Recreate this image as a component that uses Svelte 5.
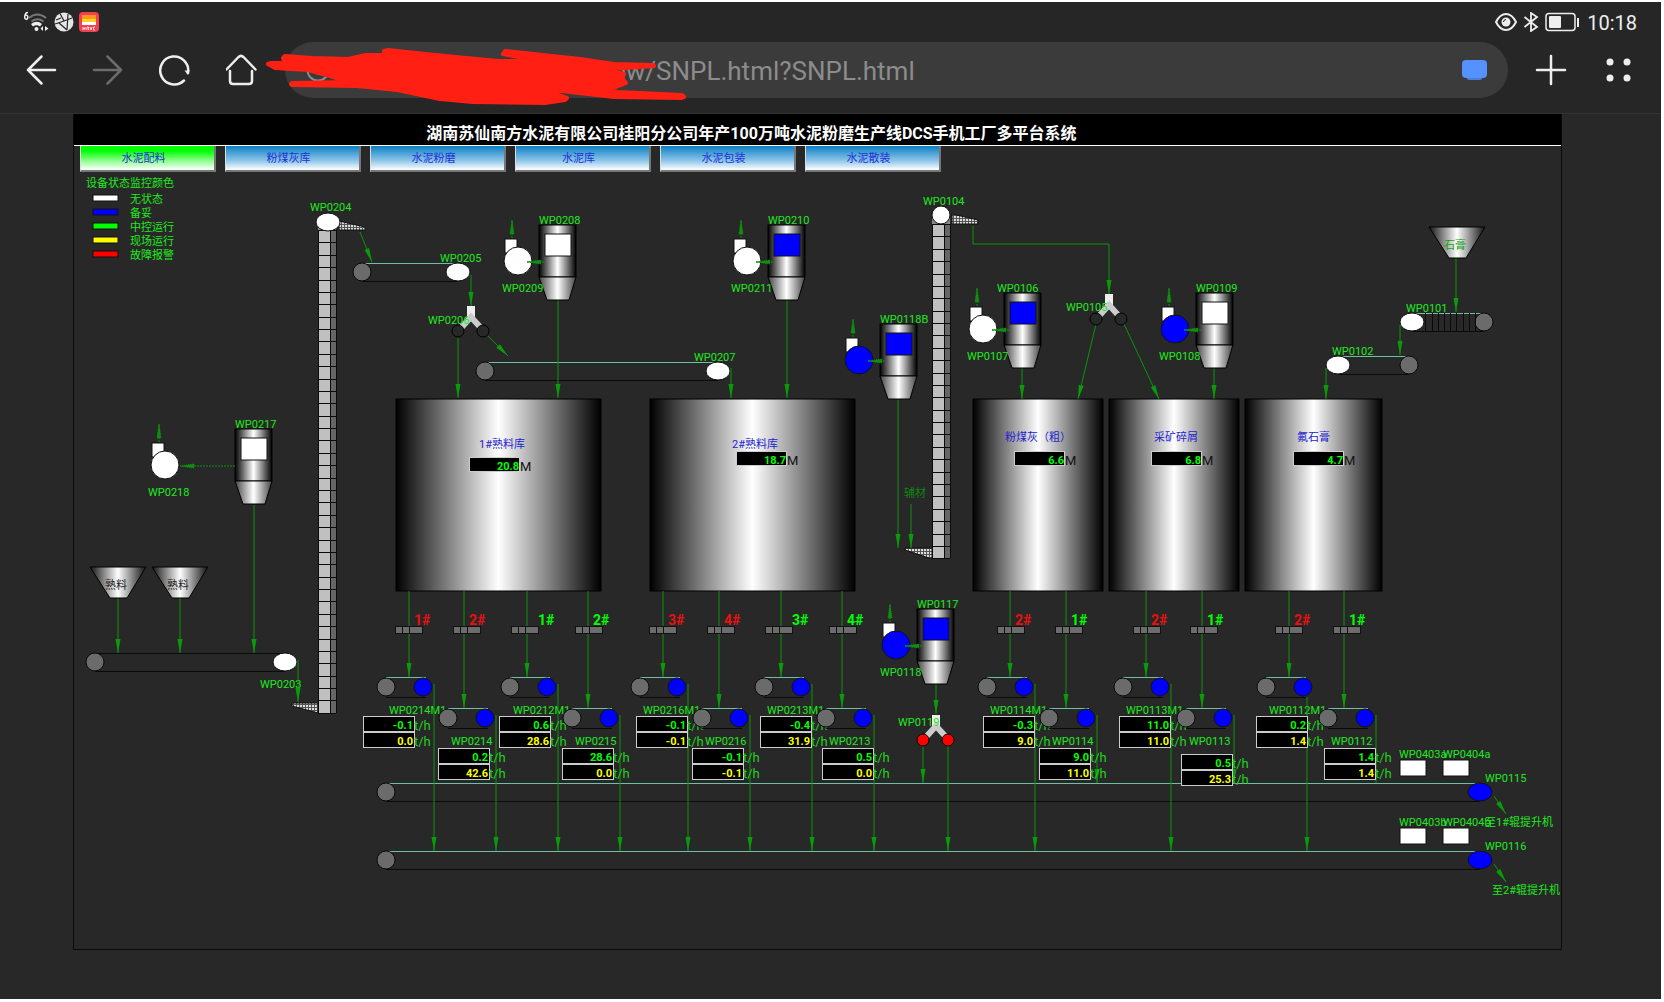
<script>
  const tabs = ['水泥配料', '粉煤灰库', '水泥粉磨', '水泥库', '水泥包装', '水泥散装'];
  let active = $state(0);

  const legend = [
    { text: '无状态', tone: 'white', y: 195 },
    { text: '备妥', tone: 'blue', y: 209 },
    { text: '中控运行', tone: 'lime', y: 223 },
    { text: '现场运行', tone: 'yellow', y: 237 },
    { text: '故障报警', tone: 'red', y: 251 }
  ];

  const silos = [
    { name: '1#熟料库', x: 396, w: 205, tx: 479, ty: 448, bx: 469, by: 457, level: '20.8' },
    { name: '2#熟料库', x: 650, w: 205, tx: 732, ty: 448, bx: 736, by: 451, level: '18.7' },
    { name: '粉煤灰（粗）', x: 973, w: 130, tx: 1005, ty: 441, bx: 1014, by: 451, level: '6.6' },
    { name: '采矿碎屑', x: 1109, w: 130, tx: 1154, ty: 441, bx: 1151, by: 451, level: '6.8' },
    { name: '氟石膏', x: 1245, w: 137, tx: 1297, ty: 441, bx: 1293, by: 451, level: '4.7' }
  ];

  const filters = [
    { name: 'WP0208', x: 539, y: 225, lx: 539, tone: 'white', fan: 'WP0209', fanTone: 'white', reach: 0 },
    { name: 'WP0210', x: 768, y: 225, lx: 768, tone: 'blue', fan: 'WP0211', fanTone: 'white', reach: 0 },
    { name: 'WP0118B', x: 880, y: 324, lx: 880, tone: 'blue', fan: '', fanTone: 'blue', reach: 0 },
    { name: 'WP0106', x: 1004, y: 293, lx: 997, tone: 'blue', fan: 'WP0107', fanTone: 'white', reach: 0 },
    { name: 'WP0109', x: 1196, y: 293, lx: 1196, tone: 'white', fan: 'WP0108', fanTone: 'blue', reach: 0 },
    { name: 'WP0217', x: 235, y: 429, lx: 235, tone: 'white', fan: 'WP0218', fanTone: 'white', reach: 49 },
    { name: 'WP0117', x: 917, y: 609, lx: 917, tone: 'blue', fan: 'WP0118', fanTone: 'blue', reach: 0 }
  ];

  const hoppers = [
    { name: '石膏', x: 1429, y: 227, tone: 'gypsum' },
    { name: '熟料', x: 90, y: 567, tone: 'clinker' },
    { name: '熟料', x: 152, y: 567, tone: 'clinker' }
  ];

  const elevators = [
    { x: 318, top: 230, count: 39 },
    { x: 932, top: 224, count: 27 }
  ];

  const chutes = [
    '339,221 339,230 365,230 365,227',
    '952,214 952,224 978,224 978,220',
    '292,703 318,703 318,713 292,706',
    '905,548 932,548 932,559 905,550'
  ];

  const belts = [
    { name: 'WP0205', lx: 440, gray: 362, drive: 458, y: 272, tone: 'white', top: 'belt' },
    { name: 'WP0207', lx: 694, gray: 485, drive: 718, y: 371, tone: 'white', top: 'belt' },
    { name: 'WP0203', lx: 260, ly: 688, gray: 95, drive: 285, y: 662, tone: 'white', top: 'dark' },
    { name: 'WP0101', lx: 1406, gray: 1484, drive: 1412, y: 322, tone: 'white', top: 'belt' },
    { name: 'WP0102', lx: 1332, gray: 1409, drive: 1338, y: 365, tone: 'white', top: 'belt' },
    { name: 'WP0115', lx: 1485, gray: 386, drive: 1480, y: 792, tone: 'blue', top: 'belt' },
    { name: 'WP0116', lx: 1485, gray: 386, drive: 1480, y: 860, tone: 'blue', top: 'belt' }
  ];
  const slats = [1425, 1432, 1438, 1444, 1450, 1456, 1463, 1469, 1475];

  const splitters = [
    { name: 'WP0206', x: 471, y: 306, lx: 428, ly: 324, tone: 'idle' },
    { name: 'WP0105', x: 1109, y: 294, lx: 1066, ly: 311, tone: 'idle' },
    { name: 'WP0119', x: 936, y: 715, lx: 898, ly: 726, tone: 'red' }
  ];

  // Feeders below the silos; "low" ones sit one step further down.
  const feeders = [
    { name: 'WP0214M1', tag: '1#', hand: true, x: 409, grate: 395, gray: 386, box: 363, v: ['-0.1', '0.0'] },
    { name: 'WP0214', tag: '2#', hand: true, x: 464, grate: 453, gray: 448, box: 438, v: ['0.2', '42.6'], low: true },
    { name: 'WP0212M1', tag: '1#', x: 527, grate: 511, gray: 510, box: 499, v: ['0.6', '28.6'] },
    { name: 'WP0215', tag: '2#', x: 588, grate: 575, gray: 572, box: 562, v: ['28.6', '0.0'], low: true },
    { name: 'WP0216M1', tag: '3#', hand: true, x: 663, grate: 649, gray: 640, box: 636, v: ['-0.1', '-0.1'] },
    { name: 'WP0216', tag: '4#', hand: true, x: 719, grate: 707, gray: 702, box: 692, v: ['-0.1', '-0.1'], low: true },
    { name: 'WP0213M1', tag: '3#', x: 781, grate: 765, gray: 764, box: 760, v: ['-0.4', '31.9'] },
    { name: 'WP0213', tag: '4#', x: 842, grate: 829, gray: 826, box: 822, v: ['0.5', '0.0'], low: true },
    { name: 'WP0114M1', tag: '2#', hand: true, x: 1010, grate: 997, gray: 987, box: 983, v: ['-0.3', '9.0'] },
    { name: 'WP0114', tag: '1#', x: 1066, grate: 1055, gray: 1049, box: 1039, v: ['9.0', '11.0'], low: true, end: 783 },
    { name: 'WP0113M1', tag: '2#', hand: true, x: 1146, grate: 1133, gray: 1123, box: 1119, v: ['11.0', '11.0'] },
    { name: 'WP0113', tag: '1#', x: 1202, grate: 1190, gray: 1186, box: 1181, v: ['0.5', '25.3'], low: true, end: 783, drop: 6 },
    { name: 'WP0112M1', tag: '2#', hand: true, x: 1289, grate: 1275, gray: 1266, box: 1256, v: ['0.2', '1.4'], out: 1307, from: 697 },
    { name: 'WP0112', tag: '1#', x: 1344, grate: 1333, gray: 1328, box: 1324, v: ['1.4', '1.4'], low: true, end: 783, plain: true }
  ];

  const flows = [
    [360, 232, 372, 262], [471, 275, 471, 306], [458, 338, 458, 398], [488, 336, 508, 356],
    [558, 300, 558, 398], [731, 368, 731, 398], [787, 300, 787, 398], [1109, 244, 1109, 294],
    [1096, 324, 1078, 399], [1124, 324, 1159, 399], [1022, 368, 1022, 399], [1214, 368, 1214, 399],
    [898, 399, 898, 548], [911, 504, 911, 548], [1456, 258, 1456, 312], [1400, 325, 1400, 355],
    [1326, 368, 1326, 399], [254, 505, 254, 653], [118, 597, 118, 653], [180, 597, 180, 653],
    [298, 660, 298, 702], [936, 684, 936, 714], [923, 746, 923, 783], [948, 746, 948, 851],
    [1494, 796, 1506, 814], [1494, 864, 1506, 882]
  ];

  const motors = [
    { name: 'WP0403a', x: 1400, lx: 1399, y: 760 },
    { name: 'WP0404a', x: 1443, lx: 1443, y: 760 },
    { name: 'WP0403b', x: 1400, lx: 1399, y: 828 },
    { name: 'WP0404b', x: 1443, lx: 1443, y: 828 }
  ];

  const notes = [
    { text: 'WP0204', x: 310, y: 211 },
    { text: 'WP0104', x: 923, y: 205 },
    { text: '至1#辊提升机', x: 1485, y: 826 },
    { text: '至2#辊提升机', x: 1492, y: 894 }
  ];

  function head(x1, y1, x2, y2) {
    const len = Math.hypot(x2 - x1, y2 - y1);
    const ux = (x2 - x1) / len;
    const uy = (y2 - y1) / len;
    const bx = x2 - ux * 14;
    const by = y2 - uy * 14;
    return `${x2},${y2} ${bx - uy * 2.5},${by + ux * 2.5} ${bx + uy * 2.5},${by - ux * 2.5}`;
  }
  const seg = (e, i) => Math.round(e.top + i * 12.38);
</script>

{#snippet arrow(x1, y1, x2, y2)}
  <line class="flow" {x1} {y1} {x2} {y2} />
  <polygon class="head" points={head(x1, y1, x2, y2)} />
{/snippet}

{#snippet reading(x, y, value, tone)}
  <rect class="well" {x} {y} width="51" height="15" />
  <text class="value {tone}" x={x + 50} y={y + 13}>{value}</text>
  <text class="unit" x={x + 51} y={y + 14}>t/h</text>
{/snippet}

<div class="screen">
  <header>
    <div class="status">
      <div class="left">
        <svg width="26" height="22" viewBox="23 11 26 22" aria-hidden="true">
          <path d="M28 12.500q-3 0-3.300 4.500a1.600 2 0 1 0 .8-1.500" class="thin" />
          <path d="M29 18q8-7 17 0M31.500 21.500q6-4.500 12 0" class="dim" />
          <path d="M31 24q6-4.500 11 0l-2 2.500q-3.500-2.500-7 0z" fill="#eee" />
          <circle cx="36.500" cy="29" r="2" fill="#eee" />
          <path d="M43 26v5l-2.500-2.500zM45 31v-5l3.500 2.500z" fill="#eee" />
        </svg>
        <svg width="20" height="20" viewBox="0 0 20 20" aria-hidden="true">
          <circle cx="10" cy="10" r="9.500" fill="#e6e6e6" />
          <path d="M6 1.500L10 9 1 12M10 9l8-3M5 11l8 7M14 2l-1 16M2 8l5-2" class="cut" />
        </svg>
        <svg width="20" height="20" viewBox="0 0 20 20" aria-hidden="true">
          <rect width="20" height="20" rx="4" fill="#f4404e" />
          <path d="M3 3h14v4H3z" fill="#ff9a1c" />
          <path d="M3 7h14v4H3z" fill="#ffd02a" />
          <path d="M3 10h14v3H3z" fill="#fff" />
          <path d="M4 15v3M6 15v3M4 16.500h2M8 18v-3h1.500v3M11 15l1 3 1-3M16 15h-1.500v3H16" stroke="#ffd9dc" fill="none" />
        </svg>
      </div>
      <div class="right">
        <svg width="22" height="20" viewBox="0 0 22 20" aria-hidden="true">
          <path d="M1 10Q5 2 11 2t10 8q-4 8-10 8T1 10z" fill="none" stroke="#eee" stroke-width="2" />
          <circle cx="11" cy="10" r="4.500" fill="#eee" />
          <path d="M8.500 10a2.500 2.500 0 0 1 2.500-2.500" stroke="#262626" fill="none" />
        </svg>
        <svg width="16" height="20" viewBox="0 0 16 20" aria-hidden="true">
          <path d="M1.500 5l12.500 10-6 4V1l6 4L1.500 15" fill="none" stroke="#eee" stroke-width="1.800" />
        </svg>
        <svg width="36" height="20" viewBox="0 0 36 20" aria-hidden="true">
          <rect x="1" y="1.500" width="29" height="17" rx="3" fill="none" stroke="#eee" stroke-width="1.500" />
          <rect x="4" y="4" width="12" height="12" rx="1" fill="#eee" />
          <rect x="32" y="6" width="2" height="9" fill="#eee" />
        </svg>
        <span class="clock">10:18</span>
      </div>
    </div>

    <div class="toolbar">
      <div class="nav">
        <button aria-label="后退">
          <svg width="32" height="32" viewBox="0 0 32 32"><path d="M30 16H3M16.500 2.500L3 16l13.500 13.500" /></svg>
        </button>
        <button class="off" aria-label="前进">
          <svg width="32" height="32" viewBox="0 0 32 32"><path d="M2 16h27M15.500 2.500L29 16 15.500 29.500" /></svg>
        </button>
        <button aria-label="刷新">
          <svg width="32" height="32" viewBox="1 0 32 32">
            <path d="M26 26.500A14 14 0 1 1 30 19" />
            <path d="M26.500 16.500h5L30 21z" class="solid" />
          </svg>
        </button>
        <button aria-label="主页">
          <svg width="32" height="32" viewBox="1 0 32 32">
            <path d="M1.500 15.500L13.500 3q2.500-2.300 5 0l12 12.500M5 17v10q0 3 3 3h16q3 0 3-3V17" />
          </svg>
        </button>
      </div>
      <div class="address">
        <svg class="info" width="24" height="24" viewBox="0 0 24 24" aria-hidden="true">
          <circle cx="12" cy="12" r="10.500" />
          <path d="M12 10v7M12 6v2" />
        </svg>
        <input type="text" aria-label="网址" value="ew/SNPL.html?SNPL.html" />
        <svg class="scribble" width="430" height="56" viewBox="285 42 430 56" aria-hidden="true">
          <path d="M268 64L271 63 285 63 283 58 285 56 312 58 348 59 366 55 384 55 384 51 388 50 435 55 498 61 538 61 503 54 505 51 580 59 614 64 653 65 654 66 625 68 606 70 624 74 622 78 626 83 616 87 603 90 618 92 682 95 684 97 681 98 614 97 553 90 549 92 567 98 565 100 545 103 473 102 440 99 397 90 357 86 292 85 291 84 292 83 350 82 330 76 308 70 275 68z" />
        </svg>
        <svg class="device" width="25" height="21" viewBox="0 0 25 21" aria-hidden="true">
          <path d="M5 17h15v1q0 2-2 2H7q-2 0-2-2z" fill="#4a80d8" />
          <rect width="25" height="18" rx="4" fill="#5591ff" />
        </svg>
      </div>
      <div class="nav">
        <button aria-label="新建标签页">
          <svg width="32" height="32" viewBox="0 0 32 32"><path d="M16 2v28M2 16h28" /></svg>
        </button>
        <button aria-label="菜单">
          <svg width="32" height="32" viewBox="0 0 32 32">
            <g class="solid">
              <circle cx="8" cy="8" r="3.500" /><circle cx="25" cy="8" r="3.500" />
              <circle cx="8" cy="24" r="3.500" /><circle cx="25" cy="24" r="3.500" />
            </g>
          </svg>
        </button>
      </div>
    </div>
  </header>

  <main>
    <h1>湖南苏仙南方水泥有限公司桂阳分公司年产100万吨水泥粉磨生产线DCS手机工厂多平台系统</h1>
    <nav>
      {#each tabs as tab, i}
        <button class:active={active === i} onclick={() => (active = i)}>{tab}</button>
      {/each}
    </nav>

    <svg class="plant" viewBox="74 172 1487 777" role="img" aria-label="水泥配料">
      <defs>
        <linearGradient id="steel">
          <stop offset="0" stop-color="#000" />
          <stop offset="0.5" stop-color="#fff" />
          <stop offset="1" stop-color="#000" />
        </linearGradient>
        <linearGradient id="hopper">
          <stop offset="0" stop-color="#111" />
          <stop offset="0.5" stop-color="#fff" />
          <stop offset="1" stop-color="#111" />
        </linearGradient>
        <linearGradient id="cone">
          <stop offset="0" stop-color="#444" />
          <stop offset="0.5" stop-color="#fff" />
          <stop offset="1" stop-color="#444" />
        </linearGradient>
        <pattern id="mesh" width="3" height="3" patternUnits="userSpaceOnUse">
          <rect width="3" height="3" fill="#555" />
          <rect width="2" height="2" fill="#ddd" />
        </pattern>
      </defs>

      <text class="label" x="86" y="187">设备状态监控颜色</text>
      {#each legend as item}
        <rect class="key {item.tone}" x="93" y={item.y} width="25" height="6" />
        <text class="label" x="130" y={item.y + 8}>{item.text}</text>
      {/each}

      {#each elevators as e}
        <rect x={e.x} y={e.top - 7} width="18" height="7" fill="#888" />
        <rect x={e.x} y={e.top} width="12" height={seg(e, e.count) - e.top} fill="#c0c0c0" />
        <rect x={e.x + 12} y={e.top} width="6" height={seg(e, e.count) - e.top} fill="#666" />
        <path class="dark" d="M{e.x} {e.top}V{seg(e, e.count)}M{e.x + 12} {e.top}V{seg(e, e.count)}M{e.x + 18} {e.top}V{seg(e, e.count)}" />
        {#each Array(e.count + 1) as _, i}
          <line class="dark" x1={e.x} x2={e.x + 18} y1={seg(e, i)} y2={seg(e, i)} />
        {/each}
      {/each}
      {#each chutes as points}
        <polygon {points} fill="url(#mesh)" stroke="#111" />
      {/each}
      <ellipse class="white rim" cx="328" cy="222" rx="12" ry="9" />
      <circle class="white rim" cx="941" cy="215" r="9" />

      {#each silos as s}
        <rect x={s.x} y="399" width={s.w} height="192" fill="url(#steel)" stroke="#000" />
        <text class="silo" x={s.tx} y={s.ty}>{s.name}</text>
        <rect class="well" x={s.bx} y={s.by} width="50" height="14" />
        <text class="value run" x={s.bx + 50} y={s.by + 13}>{s.level}</text>
        <text class="metre" x={s.bx + 51} y={s.by + 14}>M</text>
      {/each}

      {#each belts as b}
        <line class={b.top} x1={b.gray} x2={b.drive} y1={b.y - 9} y2={b.y - 9} />
        <line class="dark" x1={b.gray} x2={b.drive} y1={b.y + 9} y2={b.y + 9} />
        <circle class="roller" cx={b.gray} cy={b.y} r="9" />
        <ellipse class="{b.tone} rim" cx={b.drive} cy={b.y} rx="12" ry="9" />
        <text class="label" x={b.lx} y={b.ly ?? b.y - 10}>{b.name}</text>
      {/each}
      {#each slats as x}
        <line class="dark" x1={x} x2={x} y1="313" y2="331" />
      {/each}

      <path class="flow" d="M973 226V244H1109" />
      {#each flows as f}
        {@render arrow(f[0], f[1], f[2], f[3])}
      {/each}

      {#each hoppers as h}
        <polygon points="{h.x},{h.y} {h.x + 56},{h.y} {h.x + 37},{h.y + 31} {h.x + 20},{h.y + 31}" fill="url(#hopper)" stroke="#000" />
        <text class="label {h.tone}" x={h.x + 15} y={h.y + 22}>{h.name}</text>
      {/each}

      {#each filters as f}
        {@const fx = f.x - f.reach}
        <rect x={f.x} y={f.y} width="37" height="52" fill="url(#steel)" stroke="#000" />
        <polygon points="{f.x},{f.y + 52} {f.x + 37},{f.y + 52} {f.x + 30},{f.y + 75} {f.x + 8},{f.y + 75}" fill="url(#cone)" stroke="#000" />
        <rect class="{f.tone} rim" x={f.x + 6} y={f.y + 9} width="26" height="22" />
        <rect class="white rim" x={fx - 34} y={f.y + 14} width="12" height="14" />
        <circle class="{f.fanTone} rim" cx={fx - 21} cy={f.y + 36} r="14" />
        <line class="air" x1={fx - 27} x2={fx - 27} y1={f.y + 13} y2={f.y - 4} />
        <polygon class="puff" points="{fx - 27},{f.y - 5} {fx - 29},{f.y + 9} {fx - 25},{f.y + 9}" />
        {#if f.reach}
          <line class="air" x1={f.x} x2={f.x - 42} y1={f.y + 37} y2={f.y + 37} />
          <polygon class="puff" points="{f.x - 55},{f.y + 37} {f.x - 41},{f.y + 35} {f.x - 41},{f.y + 39}" />
        {:else}
          <line class="air" x1={f.x + 5} x2={f.x - 12} y1={f.y + 37} y2={f.y + 37} />
          <polygon class="puff" points="{f.x - 12},{f.y + 37} {f.x + 2},{f.y + 35} {f.x + 2},{f.y + 39}" />
        {/if}
        <text class="label" x={f.lx} y={f.y - 1}>{f.name}</text>
        <text class="label" x={f.reach ? 148 : f.x - 37} y={f.y + 67}>{f.fan}</text>
      {/each}

      {#each splitters as s}
        <rect class="stem" x={s.x - 4} y={s.y} width="8" height="14" />
        <path class="legs" d="M{s.x - 10} {s.y + 22}L{s.x} {s.y + 11}L{s.x + 10} {s.y + 22}" />
        <circle class="{s.tone} ring" cx={s.x - 13} cy={s.y + 25} r="6" />
        <circle class="{s.tone} ring" cx={s.x + 12} cy={s.y + 25} r="6" />
        <text class="label" x={s.lx} y={s.ly}>{s.name}</text>
      {/each}

      {#each feeders as f}
        {@const y = f.low ? 718 : 687}
        {@const by = (f.low ? 748 : 716) + (f.drop ?? 0)}
        {@const out = f.out ?? f.gray + 48}
        <text class="label" x={f.gray + 3} y={y + 27}>{f.name}</text>
        {@render arrow(f.x, 591, f.x, y - 10)}
        {#if f.plain}
          <line class="flow" x1={out} x2={out} y1={y - 3} y2={f.end} />
        {:else}
          {@render arrow(out, f.from ?? y - 3, out, f.end ?? 851)}
        {/if}
        <rect x={f.grate} y="626" width="28" height="8" fill="#111" />
        {#each [1, 8, 15, 21] as dx}
          <rect x={f.grate + dx} y="627" width="6" height="6" fill="#6c6c6c" />
        {/each}
        <text class="tag" class:hand={f.hand} x={f.x + (!f.low && !f.hand ? 11 : 5)} y="625">{f.tag}</text>
        <line class="belt" x1={f.gray} x2={f.gray + 40} y1={y - 10} y2={y - 10} />
        <line class="dark" x1={f.gray} x2={f.gray + 40} y1={y + 10} y2={y + 10} />
        {@render reading(f.box, by, f.v[0], 'run')}
        {@render reading(f.box, by + 16, f.v[1], 'set')}
      {/each}
      {#each feeders as f}
        {@const y = f.low ? 718 : 687}
        <circle class="roller" cx={f.gray} cy={y} r="9" />
        <circle class="blue rim" cx={f.gray + 37} cy={y} r="9" />
      {/each}

      {#each motors as m}
        <rect class="white rim" x={m.x} y={m.y} width="26" height="16" />
        <text class="label" x={m.lx} y={m.y - 2}>{m.name}</text>
      {/each}
      {#each notes as n}
        <text class="label" x={n.x} y={n.y}>{n.text}</text>
      {/each}
      <text class="label faint" x="904" y="497">辅材</text>
    </svg>
  </main>
</div>

<style>
  :global(body) {
    margin: 0;
    background: #fff;
  }
  .screen {
    margin: 2px 3px 3px 0;
    min-height: calc(100vh - 5px);
    box-sizing: border-box;
    background: #282828;
    font-family: Roboto, 'Noto Sans CJK SC', sans-serif;
  }
  header {
    background: #262626;
    border-bottom: 1px solid #333;
    padding-bottom: 15px;
  }
  svg {
    display: block;
  }
  .status {
    height: 40px;
    display: flex;
    justify-content: space-between;
    align-items: center;
    padding: 0 24px 0 23px;
    box-sizing: border-box;
  }
  .left {
    display: flex;
    align-items: center;
    gap: 5px;
  }
  .right {
    display: flex;
    align-items: center;
    gap: 6px;
  }
  .thin {
    fill: none;
    stroke: #eee;
    stroke-width: 1.5;
  }
  .dim {
    fill: none;
    stroke: #777;
    stroke-width: 2;
  }
  .cut {
    fill: none;
    stroke: #262626;
    stroke-width: 1.2;
  }
  .clock {
    padding-top: 2px;
    color: #eee;
    font-size: 20px;
    line-height: 24px;
  }
  .toolbar {
    display: flex;
    align-items: center;
    gap: 27px;
    padding: 0 27px 0 25px;
  }
  .nav {
    display: flex;
    gap: 35px;
  }
  button {
    border: 0;
    padding: 0;
    background: none;
    font: inherit;
  }
  .nav path {
    fill: none;
    stroke: #eee;
    stroke-width: 2.5;
    stroke-linecap: round;
    stroke-linejoin: round;
  }
  .nav .off path {
    stroke: #6c6c6c;
  }
  .nav .solid {
    fill: #eee;
    stroke: none;
  }
  .address {
    position: relative;
    flex: 1;
    display: flex;
    align-items: center;
    height: 56px;
    padding: 0 21px;
    border-radius: 28px;
    background: #3b3b3b;
  }
  .info {
    fill: none;
    stroke: #8c8c8c;
    stroke-width: 2;
  }
  .address input {
    flex: 1;
    min-width: 0;
    border: 0;
    outline: 0;
    padding: 2px 0 0 282px;
    background: none;
    color: #8c8c8c;
    font: 26px/32px Roboto, sans-serif;
  }
  .scribble {
    position: absolute;
    left: 0;
    top: 0;
    overflow: visible;
    pointer-events: none;
  }
  .scribble path {
    fill: #ff2013;
    stroke: #ff2013;
    stroke-width: 4;
    stroke-linejoin: round;
  }
  main {
    margin: 0 99px 0 73px;
    border: 1px solid #0a0a0a;
    border-top: 0;
  }
  h1 {
    margin: 0;
    height: 32px;
    padding: 9px 132px 0 0;
    box-sizing: border-box;
    border-bottom: 1px solid #fff;
    background: #000;
    color: #fff;
    font-size: 16px;
    line-height: 22px;
    text-align: center;
  }
  nav {
    display: flex;
    gap: 9px;
    padding-left: 6px;
  }
  nav button {
    width: 136px;
    height: 26px;
    padding: 2px 8px 0 0;
    border: 2px solid #777;
    border-width: 0 2px 2px 1px;
    border-left-color: #ddd;
    background: linear-gradient(#0c80c4, #8cc4e8 60%, #fff);
    color: #1f30d8;
    font-size: 11px;
    line-height: 16px;
  }
  nav button.active {
    background: linear-gradient(#00ff00 20%, #9f9 65%, #fff);
  }
  .plant {
    width: 100%;
    height: auto;
  }
  text {
    font-size: 11px;
  }
  .label {
    fill: #1fe81f;
  }
  .label.gypsum {
    fill: #17a317;
  }
  .label.clinker {
    fill: #222;
  }
  .label.faint {
    fill: #128312;
  }
  .silo {
    fill: #2424d0;
  }
  .metre {
    fill: #111;
    font-size: 13px;
  }
  .unit {
    fill: #1fd01f;
    font-size: 13px;
  }
  .value {
    font-weight: 700;
    text-anchor: end;
  }
  .run {
    fill: #0f0;
  }
  .set {
    fill: #ff0;
  }
  .tag {
    fill: #0f0;
    font-size: 14px;
    font-weight: 700;
  }
  .tag.hand {
    fill: #e81010;
  }
  .well {
    fill: #000;
    stroke: #ccc;
    shape-rendering: crispEdges;
  }
  .rim,
  .key {
    stroke: #111;
  }
  .ring {
    stroke: #000;
  }
  .white {
    fill: #fff;
  }
  .blue {
    fill: #00f;
  }
  .lime {
    fill: #0f0;
  }
  .yellow {
    fill: #ff0;
  }
  .red {
    fill: #f00;
  }
  .idle {
    fill: #282828;
  }
  .roller {
    fill: #6b6b6b;
    stroke: #0a0a0a;
  }
  .dark {
    stroke: #0a0a0a;
    fill: none;
    shape-rendering: crispEdges;
  }
  .belt {
    stroke: #6cc0a4;
    shape-rendering: crispEdges;
  }
  .flow {
    fill: none;
    stroke: #0c930c;
  }
  .head {
    fill: #0a9a0a;
  }
  .air {
    stroke: #0f8f0f;
    stroke-dasharray: 2 1;
  }
  .puff {
    fill: #0f8f0f;
    stroke: #0f8f0f;
    stroke-dasharray: 1 1;
  }
  .stem {
    fill: #eee;
  }
  .legs {
    fill: none;
    stroke: #ccc;
    stroke-width: 6;
  }
</style>
